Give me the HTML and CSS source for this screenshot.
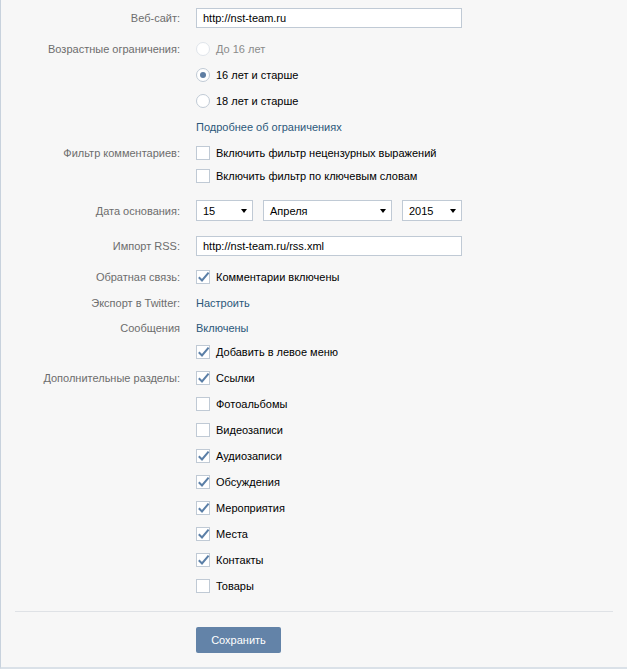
FILE: index.html
```html
<!DOCTYPE html>
<html lang="ru">
<head>
<meta charset="utf-8">
<title>Настройки сообщества</title>
<link rel="stylesheet" href="styles.css">
</head>
<body>
<div class="page">
  <div class="row r-site">
    <div class="label h20">Веб-сайт:</div>
    <div class="input">http://nst-team.ru</div>
  </div>

  <div class="row r-age">
    <div class="label h26">Возрастные ограничения:</div>
    <div class="group">
      <div class="opt h26 disabled"><span class="radio off"></span><span>До 16 лет</span></div>
      <div class="opt h26"><span class="radio on"></span><span>16 лет и старше</span></div>
      <div class="opt h26"><span class="radio"></span><span>18 лет и старше</span></div>
      <div class="opt h26"><a class="link">Подробнее об ограничениях</a></div>
    </div>
  </div>

  <div class="row r-filter">
    <div class="label h23">Фильтр комментариев:</div>
    <div class="group">
      <div class="opt h23"><span class="cb"></span><span>Включить фильтр нецензурных выражений</span></div>
      <div class="opt h23"><span class="cb"></span><span>Включить фильтр по ключевым словам</span></div>
    </div>
  </div>

  <div class="row r-date">
    <div class="label h21">Дата основания:</div>
    <div class="selects">
      <div class="select s-day">15<span class="arrow"></span></div>
      <div class="select s-month">Апреля<span class="arrow"></span></div>
      <div class="select s-year">2015<span class="arrow"></span></div>
    </div>
  </div>

  <div class="row r-rss">
    <div class="label h20">Импорт RSS:</div>
    <div class="input">http://nst-team.ru/rss.xml</div>
  </div>

  <div class="row r-feedback">
    <div class="label h26">Обратная связь:</div>
    <div class="opt h26"><span class="cb checked"><svg viewBox="0 0 14 14" width="14" height="14"><path d="M2.8 7.2 L6 10.4 L12.6 2.6" fill="none" stroke="#5b7fa7" stroke-width="2"/></svg></span><span>Комментарии включены</span></div>
  </div>

  <div class="row">
    <div class="label h26">Экспорт в Twitter:</div>
    <div class="opt h26"><a class="link">Настроить</a></div>
  </div>

  <div class="row">
    <div class="label h23">Сообщения</div>
    <div class="group">
      <div class="opt h23"><a class="link">Включены</a></div>
      <div class="opt h26"><span class="cb checked"><svg viewBox="0 0 14 14" width="14" height="14"><path d="M2.8 7.2 L6 10.4 L12.6 2.6" fill="none" stroke="#5b7fa7" stroke-width="2"/></svg></span><span>Добавить в левое меню</span></div>
    </div>
  </div>

  <div class="row">
    <div class="label h26">Дополнительные разделы:</div>
    <div class="group">
      <div class="opt h26"><span class="cb checked"><svg viewBox="0 0 14 14" width="14" height="14"><path d="M2.8 7.2 L6 10.4 L12.6 2.6" fill="none" stroke="#5b7fa7" stroke-width="2"/></svg></span><span>Ссылки</span></div>
      <div class="opt h26"><span class="cb"></span><span>Фотоальбомы</span></div>
      <div class="opt h26"><span class="cb"></span><span>Видеозаписи</span></div>
      <div class="opt h26"><span class="cb checked"><svg viewBox="0 0 14 14" width="14" height="14"><path d="M2.8 7.2 L6 10.4 L12.6 2.6" fill="none" stroke="#5b7fa7" stroke-width="2"/></svg></span><span>Аудиозаписи</span></div>
      <div class="opt h26"><span class="cb checked"><svg viewBox="0 0 14 14" width="14" height="14"><path d="M2.8 7.2 L6 10.4 L12.6 2.6" fill="none" stroke="#5b7fa7" stroke-width="2"/></svg></span><span>Обсуждения</span></div>
      <div class="opt h26"><span class="cb checked"><svg viewBox="0 0 14 14" width="14" height="14"><path d="M2.8 7.2 L6 10.4 L12.6 2.6" fill="none" stroke="#5b7fa7" stroke-width="2"/></svg></span><span>Мероприятия</span></div>
      <div class="opt h26"><span class="cb checked"><svg viewBox="0 0 14 14" width="14" height="14"><path d="M2.8 7.2 L6 10.4 L12.6 2.6" fill="none" stroke="#5b7fa7" stroke-width="2"/></svg></span><span>Места</span></div>
      <div class="opt h26"><span class="cb checked"><svg viewBox="0 0 14 14" width="14" height="14"><path d="M2.8 7.2 L6 10.4 L12.6 2.6" fill="none" stroke="#5b7fa7" stroke-width="2"/></svg></span><span>Контакты</span></div>
      <div class="opt h26"><span class="cb"></span><span>Товары</span></div>
    </div>
  </div>

  <div class="sep"></div>

  <div class="actions">
    <div class="button">Сохранить</div>
  </div>
</div>
</body>
</html>
```

FILE: styles.css
```css
html, body {
  margin: 0;
  padding: 0;
  background: #f7f7f7;
}

body {
  font-family: "Liberation Sans", Arial, sans-serif;
  font-size: 11px;
  color: #000;
}

.page {
  box-sizing: border-box;
  width: 627px;
  height: 669px;
  background: #f7f7f7;
  border-left: 1px solid #c8d2dd;
  border-bottom: 2px solid #dae1e8;
  padding-top: 8px;
}

.row {
  display: grid;
  grid-template-columns: 179px 266px;
  column-gap: 16px;
  align-items: start;
}

.label {
  display: flex;
  align-items: center;
  justify-content: flex-end;
  color: #6d6d6d;
  white-space: nowrap;
}

.h20 { height: 20px; }
.h21 { height: 21px; }
.h23 { height: 23px; }
.h26 { height: 26px; }

.r-age { margin-top: 8px; }
.r-filter { margin-top: 1px; }
.r-date { margin-top: 13px; }
.r-rss { margin-top: 15px; }
.r-feedback { margin-top: 8px; }

.input {
  box-sizing: border-box;
  height: 20px;
  width: 266px;
  background: #fff;
  border: 1px solid #c0cad5;
  padding: 0 6px;
  display: flex;
  align-items: center;
  white-space: nowrap;
}

.group {
  display: flex;
  flex-direction: column;
}

.opt {
  display: flex;
  align-items: center;
  white-space: nowrap;
}

.opt.disabled { color: #8a8a8a; }

.link {
  color: #2b587a;
  cursor: pointer;
}

.radio {
  box-sizing: border-box;
  width: 14px;
  height: 14px;
  border-radius: 50%;
  border: 1px solid #c0cad5;
  background: #fff;
  margin-right: 6px;
  display: flex;
  align-items: center;
  justify-content: center;
  flex: none;
}

.radio.off {
  border-color: #e0e5eb;
}

.radio.on::after {
  content: "";
  width: 6px;
  height: 6px;
  border-radius: 50%;
  background: #5f7ea3;
}

.cb {
  box-sizing: border-box;
  width: 14px;
  height: 14px;
  border: 1px solid #c0cad5;
  background: #fff;
  margin-right: 6px;
  flex: none;
  position: relative;
}

.cb svg {
  position: absolute;
  left: -1px;
  top: -1px;
}

.selects {
  display: flex;
  gap: 10px;
}

.select {
  box-sizing: border-box;
  height: 21px;
  background: #fff;
  border: 1px solid #c0cad5;
  padding-left: 6px;
  display: flex;
  align-items: center;
  position: relative;
}

.s-day { width: 57px; }
.s-month { width: 129px; }
.s-year { width: 60px; }

.arrow {
  position: absolute;
  right: 5px;
  top: 8px;
  width: 0;
  height: 0;
  border-left: 3.5px solid transparent;
  border-right: 3.5px solid transparent;
  border-top: 4px solid #000;
}

.sep {
  margin: 12px 0 0 14px;
  width: 598px;
  height: 1px;
  background: #dfe2e6;
}

.actions {
  margin-top: 15px;
  padding-left: 195px;
}

.button {
  width: 85px;
  height: 26px;
  border-radius: 2px;
  background: #6383a8;
  color: #fff;
  display: flex;
  align-items: center;
  justify-content: center;
}
```
